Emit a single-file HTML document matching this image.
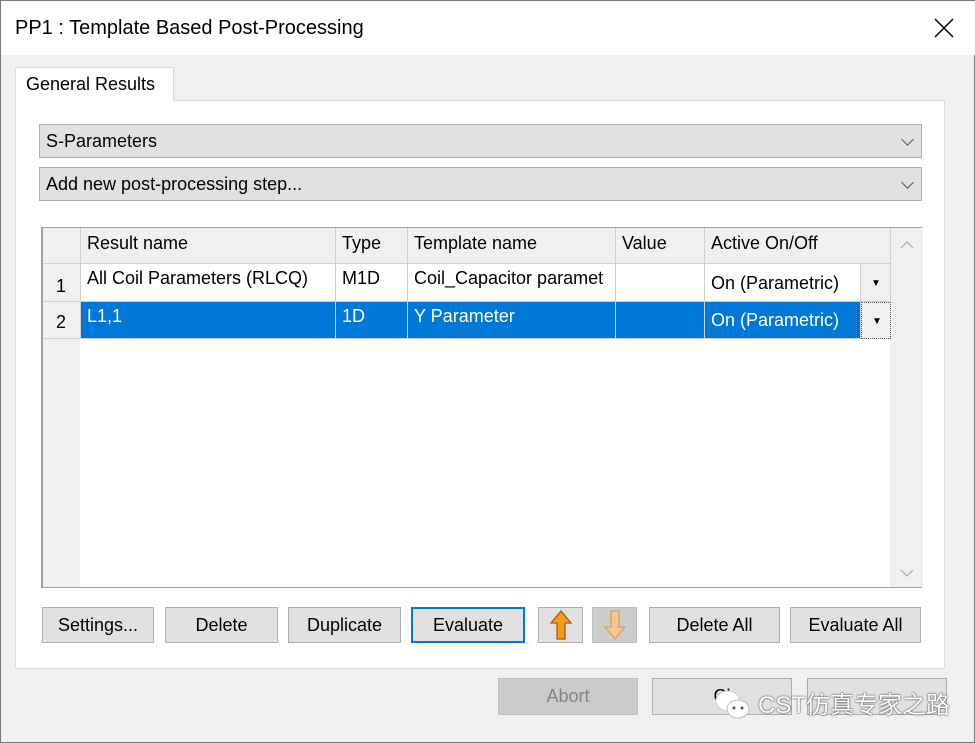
<!DOCTYPE html>
<html><head><meta charset="utf-8"><style>
*{box-sizing:border-box;margin:0;padding:0}
body{width:975px;height:743px;background:#f0f0f0;font-family:"Liberation Sans","Noto Sans CJK SC",sans-serif;font-size:18px;color:#000;position:relative;overflow:hidden;border:1px solid #7a7a7a}
.a{position:absolute}
.title{left:0;top:0;width:975px;height:54px;background:#fff}
.btn{position:absolute;background:#e1e1e1;border:1px solid #adadad;text-align:center;line-height:34px;font-size:18px;color:#000}
.combo{position:absolute;left:38px;width:883px;height:34px;background:#e1e1e1;border:1px solid #adadad;line-height:32px;padding-left:6px}
.combo:after{content:"";position:absolute;right:9px;top:10px;width:8px;height:8px;border-right:1.5px solid #555;border-bottom:1.5px solid #555;transform:rotate(45deg)}
.cell{position:absolute;border-right:1px solid #d0d0d0;border-bottom:1px solid #d0d0d0;padding-left:6px;white-space:nowrap;overflow:hidden}
</style></head><body>
<div class="a title"></div>
<div class="a" style="left:14px;top:16px;font-size:20px">PP1 : Template Based Post-Processing</div>
<svg class="a" style="left:933px;top:17px" width="20" height="20"><path d="M1 1L19 19M19 1L1 19" stroke="#000" stroke-width="1.5"/></svg>
<div class="a" style="left:14px;top:99px;width:930px;height:569px;background:#fff;border:1px solid #d9d9d9"></div>
<div class="a" style="left:14px;top:66px;width:159px;height:35px;background:#fff;border:1px solid #d9d9d9;border-bottom:none;padding:6px 0 0 10px">General Results</div>
<div class="combo" style="top:123px">S-Parameters</div>
<div class="combo" style="top:166px">Add new post-processing step...</div>
<div class="a" style="left:40px;top:226px;width:881px;height:361px;background:#f0f0f0;border:1px solid #a0a0a0;border-left:2px solid #a0a0a0">
 <div class="a" style="left:37px;top:0;width:810px;height:359px;background:#fff"></div>
 <div class="a" style="left:847px;top:0;width:33px;height:359px;background:#f0f0f0"></div>
 <svg class="a" style="left:857px;top:12px" width="14" height="10"><path d="M1 8L7 2L13 8" stroke="#b0b0b0" fill="none" stroke-width="1.3"/></svg>
 <svg class="a" style="left:857px;top:340px" width="14" height="10"><path d="M1 2L7 8L13 2" stroke="#b0b0b0" fill="none" stroke-width="1.3"/></svg>
 <div class="cell" style="left:0;top:0;width:38px;height:36px;background:#f0f0f0"></div>
 <div class="cell" style="left:38px;top:0;width:255px;height:36px;padding-top:5px;background:#f0f0f0">Result name</div>
 <div class="cell" style="left:293px;top:0;width:72px;height:36px;padding-top:5px;background:#f0f0f0">Type</div>
 <div class="cell" style="left:365px;top:0;width:208px;height:36px;padding-top:5px;background:#f0f0f0">Template name</div>
 <div class="cell" style="left:573px;top:0;width:89px;height:36px;padding-top:5px;background:#f0f0f0">Value</div>
 <div class="cell" style="left:662px;top:0;width:186px;height:36px;padding-top:5px;background:#f0f0f0">Active On/Off</div>
 <div class="cell" style="left:0;top:36px;width:38px;height:38px;padding:12px 0 0 13px">1</div>
 <div class="cell" style="left:38px;top:36px;width:255px;height:38px;background:#fff;padding-top:4px">All Coil Parameters (RLCQ)</div>
 <div class="cell" style="left:293px;top:36px;width:72px;height:38px;background:#fff;padding-top:4px">M1D</div>
 <div class="cell" style="left:365px;top:36px;width:208px;height:38px;background:#fff;padding-top:4px">Coil_Capacitor paramet</div>
 <div class="cell" style="left:573px;top:36px;width:89px;height:38px;background:#fff"></div>
 <div class="cell" style="left:662px;top:36px;width:156px;height:38px;background:#fff;padding-top:9px">On (Parametric)</div>
 <div class="cell" style="left:818px;top:36px;width:30px;height:38px;background:#f0f0f0;font-size:10px;padding:14px 0 0 10px">▼</div>
 <div class="cell" style="left:0;top:74px;width:38px;height:37px;padding:10px 0 0 13px">2</div>
 <div class="cell" style="left:38px;top:74px;width:255px;height:37px;background:#0078d7;color:#fff;padding-top:4px">L1,1</div>
 <div class="cell" style="left:293px;top:74px;width:72px;height:37px;background:#0078d7;color:#fff;padding-top:4px">1D</div>
 <div class="cell" style="left:365px;top:74px;width:208px;height:37px;background:#0078d7;color:#fff;padding-top:4px">Y Parameter</div>
 <div class="cell" style="left:573px;top:74px;width:89px;height:37px;background:#0078d7"></div>
 <div class="cell" style="left:662px;top:74px;width:156px;height:37px;background:#0078d7;color:#fff;padding-top:8px">On (Parametric)</div>
 <div class="cell" style="left:818px;top:74px;width:30px;height:37px;background:#f0f0f0;border:1px dotted #555;font-size:10px;padding:13px 0 0 10px">▼</div>
</div>
<div class="btn" style="left:41px;top:606px;width:112px;height:36px">Settings...</div>
<div class="btn" style="left:164px;top:606px;width:113px;height:36px">Delete</div>
<div class="btn" style="left:287px;top:606px;width:113px;height:36px">Duplicate</div>
<div class="btn" style="left:410px;top:606px;width:114px;height:36px;border:2px solid #0078d7;line-height:32px">Evaluate</div>
<div class="btn" style="left:537px;top:606px;width:45px;height:36px"><svg width="26" height="32" style="margin-top:1px"><path d="M13 2L23 14H17V30H9V14H3Z" fill="#f29b1d" stroke="#b0560a" stroke-width="1.3"/></svg></div>
<div class="btn" style="left:591px;top:606px;width:45px;height:36px;background:#cccccc;border-color:#bfbfbf"><svg width="26" height="32" style="margin-top:1px"><path d="M9 2H17V18H23L13 30L3 18H9Z" fill="#f0c890" stroke="#d4a060" stroke-width="1.3"/></svg></div>
<div class="btn" style="left:648px;top:606px;width:131px;height:36px">Delete All</div>
<div class="btn" style="left:789px;top:606px;width:131px;height:36px">Evaluate All</div>
<div class="btn" style="left:497px;top:677px;width:140px;height:37px;background:#cccccc;border-color:#bfbfbf;color:#838383">Abort</div>
<div class="btn" style="left:651px;top:677px;width:140px;height:37px">Cl</div>
<div class="btn" style="left:806px;top:677px;width:140px;height:37px"></div>
<svg class="a" style="left:712px;top:688px" width="40" height="32"><ellipse cx="15" cy="12" rx="12" ry="10" fill="#fff" stroke="#ccc"/><ellipse cx="25" cy="20" rx="11" ry="9" fill="#fff" stroke="#bbb"/><circle cx="21" cy="19" r="1.5" fill="#555"/><circle cx="29" cy="19" r="1.5" fill="#555"/></svg>
<div class="a" style="left:757px;top:684px;font-size:24px;color:#fff;text-shadow:0 0 2px #555,0 0 1px #333">CST仿真专家之路</div>
</body></html>
